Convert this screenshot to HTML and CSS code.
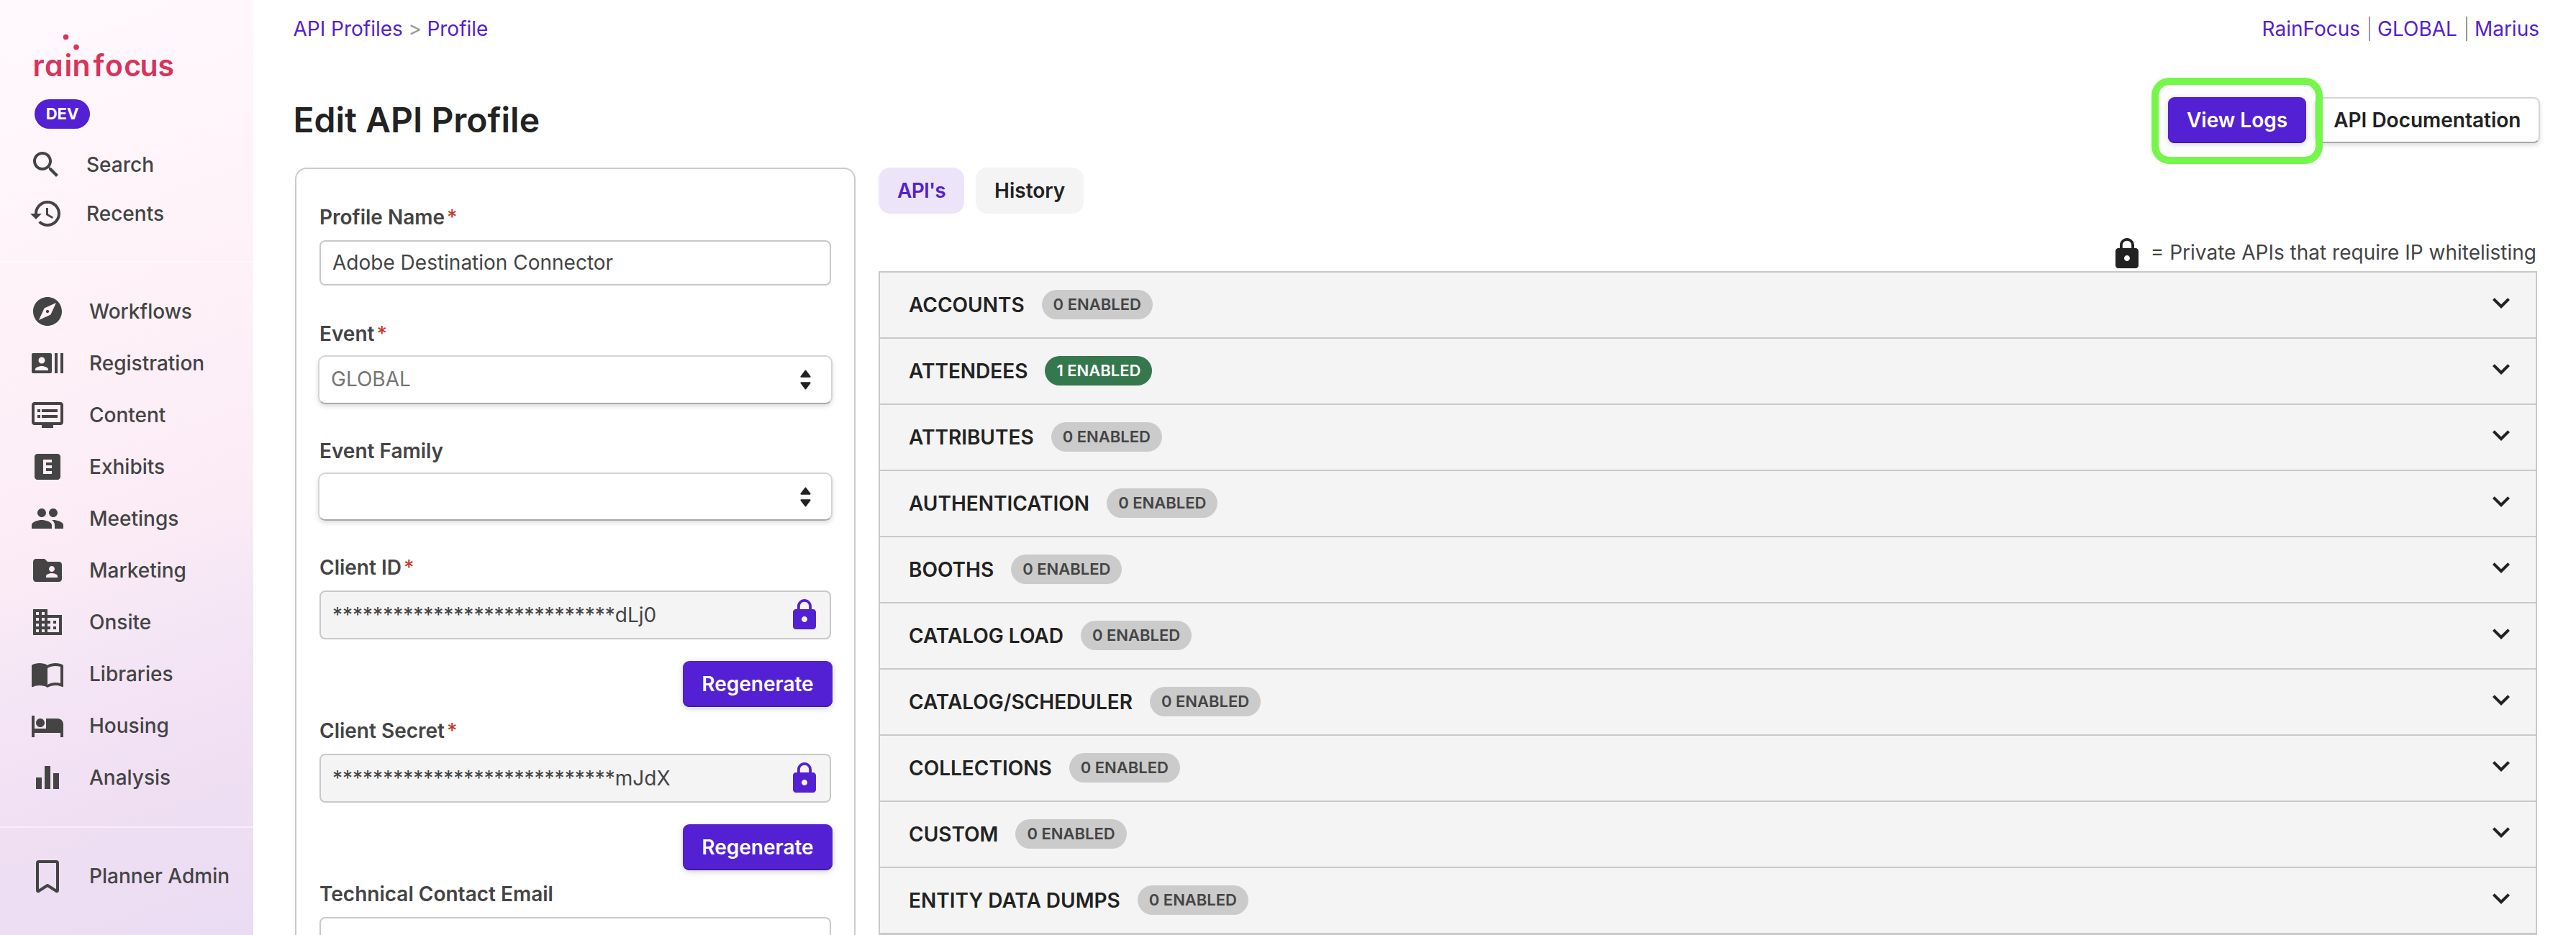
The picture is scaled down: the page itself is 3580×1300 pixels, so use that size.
FILE: index.html
```html
<!DOCTYPE html>
<html lang="en">
<head>
<meta charset="utf-8">
<title>Edit API Profile</title>
<link rel="stylesheet" href="styles.css">
</head>
<body>
<svg class="sprite" aria-hidden="true">
  <symbol id="i-lock" viewBox="0 0 24 24"><path d="M18 8h-1V6c0-2.76-2.24-5-5-5S7 3.24 7 6v2H6c-1.1 0-2 .9-2 2v10c0 1.1.9 2 2 2h12c1.1 0 2-.9 2-2V10c0-1.1-.9-2-2-2zm-6 9c-1.1 0-2-.9-2-2s.9-2 2-2 2 .9 2 2-.9 2-2 2zm3.1-9H8.9V6c0-1.71 1.39-3.1 3.1-3.1 1.71 0 3.1 1.39 3.1 3.1v2z"/></symbol>
  <symbol id="i-chevron" viewBox="0 0 24 24"><path d="M16.59 8.59 12 13.17 7.41 8.59 6 10l6 6 6-6z"/></symbol>
  <symbol id="i-updown" viewBox="0 0 14 26"><path d="M7 1.5 12.6 9H1.4ZM7 24.5 12.6 17H1.4Z"/></symbol>
</svg>
<div class="app">
  <aside class="sidebar">
    <svg class="logo" viewBox="0 0 200 70" role="img" aria-label="rainfocus">
      <circle cx="47.5" cy="7.5" r="3.8"/>
      <circle cx="62" cy="21.5" r="3.8"/>
      <text x="1.4 18 45.6 56.4 85.6 102 128.3 150.6 175.6" y="61.7">rainfocus</text>
    </svg>
    <span class="env">DEV</span>
    <nav class="tools">
      <a class="item"><svg class="icon" viewBox="0 0 24 24"><path d="M15.5 14h-.79l-.28-.27C15.41 12.59 16 11.11 16 9.5 16 5.91 13.09 3 9.5 3S3 5.91 3 9.5 5.91 16 9.5 16c1.61 0 3.09-.59 4.23-1.57l.27.28v.79l5 4.99L20.49 19l-4.99-5zm-6 0C7.01 14 5 11.99 5 9.5S7.01 5 9.5 5 14 7.01 14 9.5 11.99 14 9.5 14z"/></svg>Search</a>
      <a class="item"><svg class="icon" viewBox="0 0 24 24"><path d="M13 3c-4.97 0-9 4.03-9 9H1l3.89 3.89.07.14L9 12H6c0-3.87 3.13-7 7-7s7 3.13 7 7-3.13 7-7 7c-1.93 0-3.68-.79-4.94-2.06l-1.42 1.42C8.27 19.99 10.51 21 13 21c4.97 0 9-4.03 9-9s-4.03-9-9-9zm-1 5v5l4.28 2.54.72-1.21-3.5-2.08V8H12z"/></svg>Recents</a>
    </nav>
    <nav class="menu">
      <a class="item"><svg class="icon" viewBox="0 0 24 24"><path d="M12 10.9c-.61 0-1.1.49-1.1 1.1s.49 1.1 1.1 1.1c.61 0 1.1-.49 1.1-1.1s-.49-1.1-1.1-1.1zM12 2C6.48 2 2 6.48 2 12s4.48 10 10 10 10-4.48 10-10S17.52 2 12 2zm2.19 12.19L6 18l3.81-8.19L18 6l-3.81 8.19z"/></svg>Workflows</a>
      <a class="item"><svg class="icon" viewBox="0 0 24 24"><path d="M21 5v14h2V5h-2zm-4 14h2V5h-2v14zM14 5H2c-.55 0-1 .45-1 1v12c0 .55.45 1 1 1h12c.55 0 1-.45 1-1V6c0-.55-.45-1-1-1zM8 7.75c1.24 0 2.25 1.01 2.25 2.25S9.24 12.25 8 12.25 5.75 11.24 5.75 10 6.76 7.75 8 7.75zM12.5 17h-9v-.75c0-1.5 3-2.25 4.5-2.25s4.5.75 4.5 2.25V17z"/></svg>Registration</a>
      <a class="item"><svg class="icon" viewBox="0 0 24 24"><path d="M21 3H3c-1.1 0-2 .9-2 2v12c0 1.1.9 2 2 2h5v2h8v-2h5c1.1 0 1.99-.9 1.99-2L23 5c0-1.1-.9-2-2-2zm0 14H3V5h18v12zm-2-9H8v2h11V8zm0 4H8v2h11v-2zM7 8H5v2h2V8zm0 4H5v2h2v-2z"/></svg>Content</a>
      <a class="item"><svg class="icon" viewBox="0 0 24 24"><path d="M19 3H5c-1.1 0-2 .9-2 2v14c0 1.1.9 2 2 2h14c1.1 0 2-.9 2-2V5c0-1.1-.9-2-2-2zm-4 6h-4v2h4v2h-4v2h4v2H9V7h6v2z"/></svg>Exhibits</a>
      <a class="item"><svg class="icon" viewBox="0 0 24 24"><path d="M16 11c1.66 0 2.99-1.34 2.99-3S17.66 5 16 5c-1.66 0-3 1.34-3 3s1.34 3 3 3zm-8 0c1.66 0 2.99-1.34 2.99-3S9.66 5 8 5C6.34 5 5 6.34 5 8s1.34 3 3 3zm0 2c-2.33 0-7 1.17-7 3.5V19h14v-2.5c0-2.33-4.67-3.5-7-3.5zm8 0c-.29 0-.62.02-.97.05 1.16.84 1.97 1.97 1.97 3.45V19h6v-2.5c0-2.33-4.67-3.5-7-3.5z"/></svg>Meetings</a>
      <a class="item"><svg class="icon" viewBox="0 0 24 24"><path d="M20 6h-8l-2-2H4c-1.1 0-1.99.9-1.99 2L2 18c0 1.1.9 2 2 2h16c1.1 0 2-.9 2-2V8c0-1.1-.9-2-2-2zm-5 3c1.1 0 2 .9 2 2s-.9 2-2 2-2-.9-2-2 .9-2 2-2zm4 8h-8v-1c0-1.33 2.67-2 4-2s4 .67 4 2v1z"/></svg>Marketing</a>
      <a class="item"><svg class="icon" viewBox="0 0 24 24"><path d="M12 7V3H2v18h20V7H12zM6 19H4v-2h2v2zm0-4H4v-2h2v2zm0-4H4V9h2v2zm0-4H4V5h2v2zm4 12H8v-2h2v2zm0-4H8v-2h2v2zm0-4H8V9h2v2zm0-4H8V5h2v2zm10 12h-8v-2h2v-2h-2v-2h2v-2h-2V9h8v10zm-2-8h-2v2h2v-2zm0 4h-2v2h2v-2z"/></svg>Onsite</a>
      <a class="item"><svg class="icon" viewBox="0 0 24 24"><path d="M21 5c-1.11-.35-2.33-.5-3.5-.5-1.95 0-4.05.4-5.5 1.5-1.45-1.1-3.55-1.5-5.5-1.5S2.45 4.9 1 6v14.65c0 .25.25.5.5.5.1 0 .15-.05.25-.05C3.1 20.45 5.05 20 6.5 20c1.95 0 4.05.4 5.5 1.5 1.35-.85 3.8-1.5 5.5-1.5 1.65 0 3.35.3 4.75 1.05.1.05.15.05.25.05.25 0 .5-.25.5-.5V6c-.6-.45-1.25-.75-2-1zm0 13.5c-1.1-.35-2.3-.5-3.5-.5-1.7 0-4.15.65-5.5 1.5V8c1.35-.85 3.8-1.5 5.5-1.5 1.2 0 2.4.15 3.5.5v11.5z"/></svg>Libraries</a>
      <a class="item"><svg class="icon" viewBox="0 0 24 24"><path d="M7 13c1.66 0 3-1.34 3-3S8.66 7 7 7s-3 1.34-3 3 1.34 3 3 3zm12-6h-8v7H3V5H1v15h2v-3h18v3h2v-9c0-2.21-1.79-4-4-4z"/></svg>Housing</a>
      <a class="item"><svg class="icon" viewBox="0 0 24 24"><path d="M4 12h4v8H4zM10 4h4v16h-4zM16 9h4v11h-4z"/></svg>Analysis</a>
    </nav>
    <nav class="admin">
      <a class="item"><svg class="icon outline" viewBox="0 0 48 48"><path d="M12 4h24q2 0 2 2v38q0 1.5-1.500 1L24 37 11.500 45q-1.500.5-1.500-1V6q0-2 2-2z"/></svg>Planner Admin</a>
    </nav>
  </aside>
  <main class="main">
    <div class="topbar">
      <div class="crumbs"><a>API Profiles</a><span>&gt;</span><a>Profile</a></div>
      <div class="links"><a>RainFocus</a><a>GLOBAL</a><a>Marius</a></div>
    </div>
    <header class="head">
      <h1>Edit API Profile</h1>
      <div class="actions">
        <span class="spot"><button class="btn primary">View Logs</button></span>
        <button class="btn plain">API Documentation</button>
      </div>
    </header>
    <div class="columns">
      <form class="card">
        <label>Profile Name<i>*</i></label>
        <div class="input name">Adobe Destination Connector</div>
        <label>Event<i>*</i></label>
        <div class="select">GLOBAL<svg><use href="#i-updown"/></svg></div>
        <label>Event Family</label>
        <div class="select family"><svg><use href="#i-updown"/></svg></div>
        <label>Client ID<i>*</i></label>
        <div class="input locked">****************************dLj0<svg><use href="#i-lock"/></svg></div>
        <button class="btn primary regen">Regenerate</button>
        <label>Client Secret<i>*</i></label>
        <div class="input locked">****************************mJdX<svg><use href="#i-lock"/></svg></div>
        <button class="btn primary regen">Regenerate</button>
        <label>Technical Contact Email</label>
        <div class="input"></div>
      </form>
      <section class="apis">
        <div class="tabs"><span class="tab active">API's</span><span class="tab">History</span></div>
        <p class="legend"><svg><use href="#i-lock"/></svg>= Private APIs that require IP whitelisting</p>
        <ul class="list">
          <li><b>ACCOUNTS</b><em>0 ENABLED</em><svg><use href="#i-chevron"/></svg></li>
          <li><b>ATTENDEES</b><em class="on">1 ENABLED</em><svg><use href="#i-chevron"/></svg></li>
          <li><b>ATTRIBUTES</b><em>0 ENABLED</em><svg><use href="#i-chevron"/></svg></li>
          <li><b>AUTHENTICATION</b><em>0 ENABLED</em><svg><use href="#i-chevron"/></svg></li>
          <li><b>BOOTHS</b><em>0 ENABLED</em><svg><use href="#i-chevron"/></svg></li>
          <li><b>CATALOG LOAD</b><em>0 ENABLED</em><svg><use href="#i-chevron"/></svg></li>
          <li><b>CATALOG/SCHEDULER</b><em>0 ENABLED</em><svg><use href="#i-chevron"/></svg></li>
          <li><b>COLLECTIONS</b><em>0 ENABLED</em><svg><use href="#i-chevron"/></svg></li>
          <li><b>CUSTOM</b><em>0 ENABLED</em><svg><use href="#i-chevron"/></svg></li>
          <li><b>ENTITY DATA DUMPS</b><em>0 ENABLED</em><svg><use href="#i-chevron"/></svg></li>
        </ul>
      </section>
    </div>
  </main>
</div>
</body>
</html>
```
FILE: styles.css
```css
* { box-sizing: border-box; }
body {
  margin: 0;
  background: #fff;
  color: #444;
  font: 400 28px/34px Inter, "Liberation Sans", sans-serif;
}
.sprite { display: none; }
.app { display: flex; height: 1300px; overflow: hidden; }

.sidebar {
  flex: none;
  width: 352px;
  display: flex;
  flex-direction: column;
  align-items: stretch;
  padding-top: 44px;
  background: linear-gradient(160deg, #fff9fe 0%, #fef2f8 32%, #fbebf5 57%, #f5e6f6 67%, #f0dff3 82%, #eadcf3 100%);
}
.logo { width: 200px; height: 70px; margin-left: 44px; fill: #d83359; overflow: visible; }
.logo text { font: 600 41px Inter, sans-serif; font-feature-settings: "cv11"; }
.env {
  align-self: flex-start;
  margin: 24px 0 0 48px;
  width: 77px;
  border-radius: 21px;
  background: #5321d3;
  color: #fff;
  font-size: 22px;
  font-weight: 700;
  line-height: 41px;
  text-align: center;
}
.tools { margin-top: 16px; padding-bottom: 32px; border-bottom: 2px solid #fff7fc; }
.tools .item { height: 68px; padding-left: 40px; gap: 32px; }
.menu { padding: 32px 0; border-bottom: 2px solid #f8eefa; }
.admin { padding-top: 31px; }
.item {
  display: flex;
  align-items: center;
  height: 72px;
  padding-left: 42px;
  gap: 34px;
  font-weight: 500;
  white-space: nowrap;
}
.icon { flex: none; width: 48px; height: 48px; fill: #444; }
.outline { fill: none; stroke: #444; stroke-width: 4; stroke-linejoin: round; }

.main { flex: 1; min-width: 0; padding: 23px 50px 0 55.5px; }
.topbar { display: flex; justify-content: space-between; color: #5321d3; }
.crumbs { display: flex; gap: 7.5px; }
.crumbs span { color: #999; }
.links { display: flex; padding-right: 1px; }
.links a + a { margin-left: 12px; padding-left: 10px; border-left: 2px solid #999; }

.head { display: flex; justify-content: space-between; align-items: center; height: 64px; margin-top: 78px; }
h1 { margin: 0; color: #222; font-size: 48px; font-weight: 600; line-height: 58px; }
.actions { display: flex; gap: 12px; }
.spot { position: relative; }
.spot::after {
  content: "";
  position: absolute;
  inset: -27px -23px -29px;
  border: 10px solid #74f74a;
  border-radius: 25px;
}
.btn {
  height: 64px;
  padding: 0 26px;
  border: 0;
  border-radius: 9px;
  font: 600 28px/34px Inter, sans-serif;
  white-space: nowrap;
}
.primary {
  background: #5321d3;
  color: #fff;
  box-shadow: inset 0 -2px 0 #431bab, 0 2px 8px rgba(0, 0, 0, .18);
}
.plain {
  background: #fff;
  color: #222;
  border: 2px solid #d4d4d4;
  border-bottom-color: #a8a8a8;
  padding: 0 24.5px 0 24px;
  box-shadow: 0 3px 6px rgba(0, 0, 0, .14);
}

.columns { display: flex; gap: 32px; margin: 34px 0 0 2.5px; }
.card {
  display: flex;
  flex-direction: column;
  flex: none;
  width: 779px;
  height: 1200px;
  padding: 50px 32px 0;
  border: 2px solid #cbcbcb;
  border-radius: 16px;
}
.card label { font-weight: 600; margin-bottom: 15px; }
.card label i { margin-left: 3px; color: #c9372c; font-style: normal; font-weight: 500; }
.input {
  display: flex;
  align-items: center;
  justify-content: space-between;
  height: 68px;
  padding: 0 19px 0 16px;
  border: 2px solid #c9c9c9;
  border-radius: 8px;
}
.name { height: 63px; margin-bottom: 50px; padding-bottom: 2px; }
.locked { background: #f4f4f4; margin-bottom: 30px; }
.locked svg { width: 48px; height: 48px; fill: #5321d3; margin-right: -8px; }
.select {
  display: flex;
  align-items: center;
  justify-content: space-between;
  height: 68px;
  margin: -2px -2px 48px;
  padding: 0 28px 2px 16px;
  border: 2px solid #d4d4d4;
  border-bottom-color: #a8a8a8;
  border-radius: 10px;
  color: #757575;
  box-shadow: 0 3px 6px rgba(0, 0, 0, .14);
}
.select svg {
  width: 15px;
  height: 28px;
  margin-top: 2px;
  fill: #222;
  stroke: #222;
  stroke-width: 2;
  stroke-linejoin: round;
}
.family { height: 67px; justify-content: flex-end; }
.regen { align-self: flex-end; width: 208px; margin: 0 -2px 16px 0; }

.apis { flex: 1; min-width: 0; padding-right: 4px; }
.tabs { display: flex; gap: 16px; }
.tab {
  padding: 0 26px;
  border-radius: 16px;
  background: #f4f4f4;
  color: #222;
  font-weight: 600;
  line-height: 64px;
}
.active { background: #ece5fa; color: #5321d3; letter-spacing: -.7px; }
.legend {
  display: flex;
  align-items: center;
  justify-content: flex-end;
  gap: 9px;
  height: 48px;
  margin: 32px 0 0;
  padding: 0 1px 4px 0;
}
.legend svg { width: 48px; height: 48px; margin-top: 4px; fill: #222; }
.list { list-style: none; margin: 0; padding: 0; border: 2px solid #c9c9c9; background: #f4f4f4; }
.list li { display: flex; align-items: center; height: 92px; padding: 0 24px 1px 40px; border-bottom: 2px solid #c9c9c9; }
.list b { color: #222; font-weight: 600; }
.list em {
  margin-left: 24px;
  padding: 0 16px;
  border-radius: 21px;
  background: #cbcbcb;
  font: 600 22px/41px Inter, sans-serif;
}
.list .on { background: #35784d; color: #fff; }
.list svg { width: 48px; height: 48px; margin: -5px 0 0 auto; fill: #222; }
```
